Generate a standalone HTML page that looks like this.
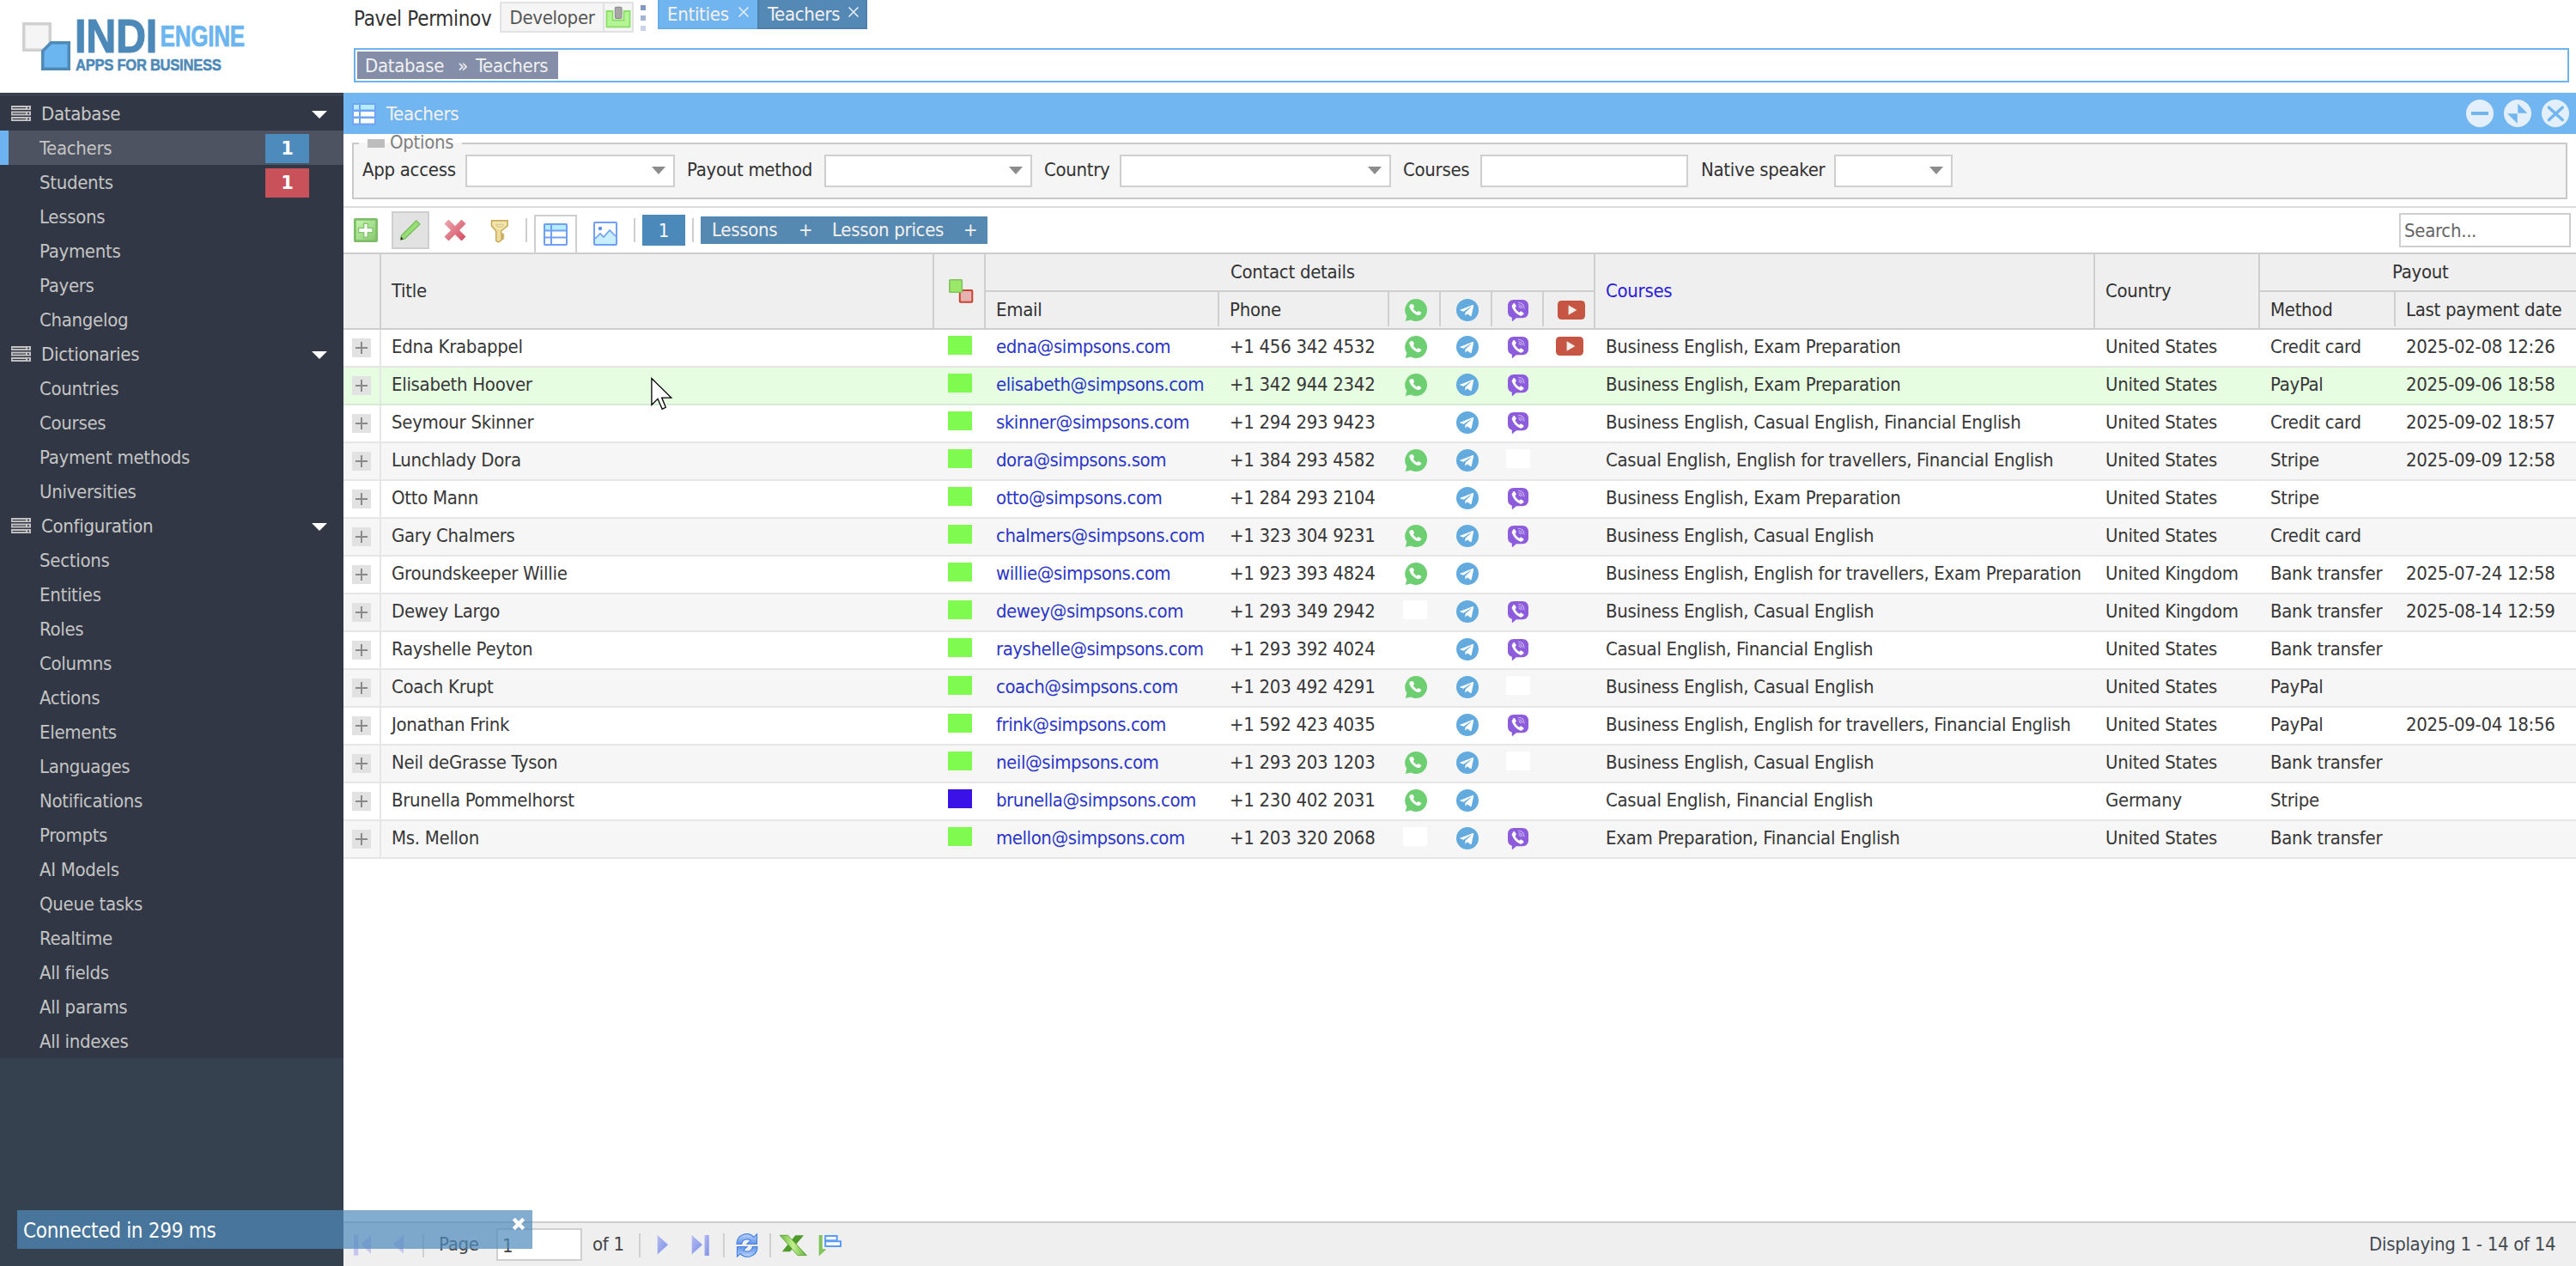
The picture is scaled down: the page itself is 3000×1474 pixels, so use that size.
<!DOCTYPE html>
<html lang="en"><head><meta charset="utf-8"><title>Teachers</title>
<style>
*{box-sizing:border-box}
html,body{margin:0;padding:0}
body{width:3000px;height:1474px;overflow:hidden;position:relative;background:#fff;color:#383838;
 font-family:"DejaVu Sans Condensed","Liberation Sans",sans-serif;font-size:22px;letter-spacing:-0.3px;line-height:26px}
.abs{position:absolute}
svg{display:block;position:absolute}
/* ---------- sidebar ---------- */
#side{position:absolute;left:0;top:108px;width:400px;height:1366px;background:#36414f}
#menu{position:absolute;left:0;top:0;width:400px;height:1124px;background:#313744;border-top:4px solid #38414e}
.mi{position:absolute;left:0;width:400px;height:40px;line-height:42px;color:#c4c4c4;padding-left:46px;white-space:nowrap}
.mi.g{padding-left:48px;color:#c8c8c8}
.mi.sel{background:#4d5360;border-left:10px solid #6db3f2;padding-left:36px}
.mi .ico{left:12.500px;top:10.500px}
.mi .arr{left:363px;top:17px}
.bdg{position:absolute;left:309px;top:4px;width:51px;height:34px;line-height:34px;text-align:center;color:#fff;font-weight:bold;font-family:"DejaVu Sans","Liberation Sans",sans-serif;font-size:21px;letter-spacing:0}
.sel .bdg{left:299px}
/* ---------- top ---------- */
#uname{position:absolute;left:412px;top:6.5px;font-size:24px;line-height:30px;color:#333;white-space:nowrap}
#dev{position:absolute;left:582px;top:2px;width:156px;height:36px;border:2px solid #e2e2e2;background:#f5f5f5}
#dev .t{position:absolute;left:9.5px;top:3.5px;color:#555;line-height:26px}
#dev .d{position:absolute;left:118px;top:0;width:2px;height:32px;background:#e2e2e2}
.tab{position:absolute;top:0;height:34px;line-height:34px;color:#f6f1ef;white-space:nowrap}
#bc{position:absolute;left:412px;top:56px;width:2580px;height:40px;border:2px solid #6db3f2;background:#fff}
#bc .p{position:absolute;left:2px;top:2px;width:234px;height:32px;background:#848ea8;color:#f1f1f1;line-height:33px;white-space:nowrap}
#bc .p span{position:absolute;top:0}
/* ---------- panel ---------- */
#ph{position:absolute;left:400px;top:108px;width:2600px;height:48px;background:#71b6f0;color:#f6f1ef}
#ph .t{position:absolute;left:50px;top:12px;line-height:26px}
#fs{position:absolute;left:410px;top:166px;width:2580px;height:66px;border:2px solid #c9c9c9;background:#f5f5f5}
#fs .lg{position:absolute;left:6px;top:-12px;height:23px;width:120px;background:linear-gradient(#fff 0,#fff 10px,#f5f5f5 10px)}
#fs .lg i{position:absolute;left:10px;top:6px;width:20px;height:10px;background:#bdbdbd}
#fs .lg span{position:absolute;left:36px;top:-3px;color:#808080;line-height:26px}
.fl{position:absolute;top:185px;line-height:26px;white-space:nowrap;color:#333}
.fi{position:absolute;top:180px;height:38px;border:2px solid #cfcfcf;background:#fff}
.fi i{position:absolute;right:9px;top:11.5px;width:0;height:0;border-left:8.5px solid transparent;border-right:8.5px solid transparent;border-top:9px solid #8c8c8c}
#tbline{position:absolute;left:400px;top:240px;width:2600px;height:2px;background:#dcdcdc}
.sep{position:absolute;top:254px;width:2px;height:28px;background:#cfcfcf}
/* ---------- grid ---------- */
#gh{position:absolute;left:400px;top:294px;width:2600px;height:90px;background:#efefef;border-top:2px solid #cdcdcd;border-bottom:2px solid #cdcdcd;overflow:hidden}
#gh .v{position:absolute;width:2px;background:#cfcfcf}
#gh .h{position:absolute;height:2px;background:#cfcfcf}
#gh .t{position:absolute;line-height:26px;white-space:nowrap;color:#333}
.row{position:absolute;left:400px;width:2600px;height:44px;border-bottom:2px solid #e6e6e6;background:#fff;overflow:hidden}
.row.alt{background:#f6f6f6}
.row.hov{background:#e6fde2;border-bottom-color:#d6ead6}
.row .c{position:absolute;top:7px;line-height:26px;white-space:nowrap}
.row .lnk{color:#2b36c9;letter-spacing:-0.45px}
.row .ex{position:absolute;left:10px;top:10px;width:22px;height:22px;background:#e2e2e2}
.row .ex:before{content:"";position:absolute;left:4px;top:10px;width:14px;height:2px;background:#8a8a8a}
.row .ex:after{content:"";position:absolute;left:10px;top:4px;width:2px;height:14px;background:#8a8a8a}
.row .v0{position:absolute;left:42px;top:0;width:2px;height:42px;background:#e6e6e6}
.row .sw{position:absolute;top:7px;width:28px;height:22px}
/* ---------- paging ---------- */
#pg{position:absolute;left:400px;top:1422px;width:2600px;height:52px;background:#efefef;border-top:2px solid #cdcdcd}
#pg .t{position:absolute;line-height:26px;top:12px;white-space:nowrap;color:#444}
#note{position:absolute;left:20px;top:1409px;width:600px;height:45px;background:rgba(78,139,188,.705);color:#fff;font-size:24px;line-height:30px}
#note .t{position:absolute;left:7px;top:9px;white-space:nowrap}
</style></head><body>
<svg style="left:0;top:0" width="400" height="108" viewBox="0 0 400 108">
<rect x="27.750" y="27.750" width="30.500" height="30.500" fill="#f5f5f5" stroke="#d0d0d0" stroke-width="3.500"/>
<path d="M59.400 49.750H80.250V80.250H49.750V59.400z" fill="#6bb6f0" stroke="#4e8ab8" stroke-width="3.500"/>
<text x="87" y="60.800" font-family="Liberation Sans, sans-serif" font-weight="bold" font-size="56" fill="#4d89b8" stroke="#4d89b8" stroke-width="1.200" textLength="96" lengthAdjust="spacingAndGlyphs">INDI</text>
<text x="186.500" y="54" font-family="Liberation Sans, sans-serif" font-weight="bold" font-size="34.500" fill="#6bb5f0" stroke="#6bb5f0" stroke-width=".7" textLength="98.500" lengthAdjust="spacingAndGlyphs">ENGINE</text>
<text x="88" y="81.500" font-family="Liberation Sans, sans-serif" font-weight="bold" font-size="18.500" fill="#4d89b8" stroke="#4d89b8" stroke-width=".5" textLength="169.500" lengthAdjust="spacingAndGlyphs">APPS FOR BUSINESS</text>
</svg>
<div id="uname">Pavel Perminov</div>
<div id="dev"><span class="t">Developer</span><span class="d"></span><svg style="left:121px;top:3px" width="30" height="26" viewBox="0 0 30 26"><path d="M1.500 6H8.500V16.500H21.500V6H28.500V24.300H1.500z" fill="#b4f595" stroke="#8ade63" stroke-width="1.800"/><rect x="11.400" y="1.300" width="7.600" height="13" rx="1" fill="#a6a6a6" stroke="#909090" stroke-width="1.200"/></svg></div>
<div class="abs" style="left:746px;top:6px;width:6px;height:6px;background:#8499c0"></div><div class="abs" style="left:746px;top:18px;width:6px;height:6px;background:#a4b4d4"></div><div class="abs" style="left:746px;top:30px;width:6px;height:6px;background:#c8d3e6"></div>
<div class="tab" style="left:766px;width:116px;background:#71b5f0;border-left:2px solid #69ade8;border-bottom:2px solid #69ade8;padding-left:9px">Entities<svg style="left:92px;top:8px" width="12" height="12" viewBox="0 0 12 12"><path d="M.5.500l11 11M11.500.500l-11 11" stroke="#e8f1fa" stroke-width="1.500" fill="none"/></svg></div>
<div class="tab" style="left:882px;width:128px;background:#5489b5;border-left:2px solid #4d81ac;border-bottom:2px solid #4d81ac;border-right:2px solid #4d81ac;padding-left:10px">Teachers<svg style="left:104px;top:8px" width="12" height="12" viewBox="0 0 12 12"><path d="M.5.500l11 11M11.500.500l-11 11" stroke="#e8f1fa" stroke-width="1.500" fill="none"/></svg></div>
<div id="bc"><div class="p"><span style="left:9px">Database</span><span style="left:117px">»</span><span style="left:138px">Teachers</span></div></div>
<div id="side"><div id="menu"></div>
<div class="mi g" style="top:4px">Database<svg class="ico" width="23" height="18" viewBox="0 0 23 18"><g fill="#c4c4c4"><rect x="0" y="0" width="23" height="5"/><rect x="0" y="6.500" width="23" height="5"/><rect x="0" y="13" width="23" height="5"/></g><g fill="#313744"><rect x="1.500" y="2" width="15.500" height="1.100"/><rect x="1.500" y="8.500" width="15.500" height="1.100"/><rect x="1.500" y="15" width="15.500" height="1.100"/><rect x="19" y="1.700" width="2" height="1.700"/><rect x="19" y="8.200" width="2" height="1.700"/><rect x="19" y="14.700" width="2" height="1.700"/></g></svg><svg class="arr" width="18" height="9" viewBox="0 0 18 9"><path d="M0 0h18l-9 9z" fill="#fff"/></svg></div>
<div class="mi sel" style="top:44px">Teachers<span class="bdg" style="background:#4c8bbb">1</span></div>
<div class="mi" style="top:84px">Students<span class="bdg" style="background:#c9515a">1</span></div>
<div class="mi" style="top:124px">Lessons</div>
<div class="mi" style="top:164px">Payments</div>
<div class="mi" style="top:204px">Payers</div>
<div class="mi" style="top:244px">Changelog</div>
<div class="mi g" style="top:284px">Dictionaries<svg class="ico" width="23" height="18" viewBox="0 0 23 18"><g fill="#c4c4c4"><rect x="0" y="0" width="23" height="5"/><rect x="0" y="6.500" width="23" height="5"/><rect x="0" y="13" width="23" height="5"/></g><g fill="#313744"><rect x="1.500" y="2" width="15.500" height="1.100"/><rect x="1.500" y="8.500" width="15.500" height="1.100"/><rect x="1.500" y="15" width="15.500" height="1.100"/><rect x="19" y="1.700" width="2" height="1.700"/><rect x="19" y="8.200" width="2" height="1.700"/><rect x="19" y="14.700" width="2" height="1.700"/></g></svg><svg class="arr" width="18" height="9" viewBox="0 0 18 9"><path d="M0 0h18l-9 9z" fill="#fff"/></svg></div>
<div class="mi" style="top:324px">Countries</div>
<div class="mi" style="top:364px">Courses</div>
<div class="mi" style="top:404px">Payment methods</div>
<div class="mi" style="top:444px">Universities</div>
<div class="mi g" style="top:484px">Configuration<svg class="ico" width="23" height="18" viewBox="0 0 23 18"><g fill="#c4c4c4"><rect x="0" y="0" width="23" height="5"/><rect x="0" y="6.500" width="23" height="5"/><rect x="0" y="13" width="23" height="5"/></g><g fill="#313744"><rect x="1.500" y="2" width="15.500" height="1.100"/><rect x="1.500" y="8.500" width="15.500" height="1.100"/><rect x="1.500" y="15" width="15.500" height="1.100"/><rect x="19" y="1.700" width="2" height="1.700"/><rect x="19" y="8.200" width="2" height="1.700"/><rect x="19" y="14.700" width="2" height="1.700"/></g></svg><svg class="arr" width="18" height="9" viewBox="0 0 18 9"><path d="M0 0h18l-9 9z" fill="#fff"/></svg></div>
<div class="mi" style="top:524px">Sections</div>
<div class="mi" style="top:564px">Entities</div>
<div class="mi" style="top:604px">Roles</div>
<div class="mi" style="top:644px">Columns</div>
<div class="mi" style="top:684px">Actions</div>
<div class="mi" style="top:724px">Elements</div>
<div class="mi" style="top:764px">Languages</div>
<div class="mi" style="top:804px">Notifications</div>
<div class="mi" style="top:844px">Prompts</div>
<div class="mi" style="top:884px">AI Models</div>
<div class="mi" style="top:924px">Queue tasks</div>
<div class="mi" style="top:964px">Realtime</div>
<div class="mi" style="top:1004px">All fields</div>
<div class="mi" style="top:1044px">All params</div>
<div class="mi" style="top:1084px">All indexes</div>
</div>
<div id="ph"><svg style="left:10px;top:12px" width="28" height="26" viewBox="0 0 28 26"><rect width="28" height="26" rx="2" fill="#6f9ff7" opacity=".75"/><rect x="2" y="2" width="6" height="5.500" fill="#b5ecff"/><rect x="10" y="2" width="16" height="5.500" fill="#b5ecff"/><rect x="2" y="10" width="6" height="5.500" fill="#fff"/><rect x="10" y="10" width="16" height="5.500" fill="#fff"/><rect x="2" y="18" width="6" height="5.500" fill="#fff"/><rect x="10" y="18" width="16" height="5.500" fill="#fff"/></svg><span class="t">Teachers</span><svg style="left:2472px;top:8px" width="32" height="32" viewBox="0 0 32 32"><circle cx="16" cy="16" r="16" fill="#e3f0fc"/><rect x="6" y="14" width="20" height="4" rx=".5" fill="#71b6f0"/></svg><svg style="left:2516px;top:8px" width="32" height="32" viewBox="0 0 32 32"><circle cx="16" cy="16" r="16" fill="#e3f0fc"/><path d="M16.300 4.700V15.700H27.400zM4.100 16.300H15.700V27.700z" fill="#71b6f0"/></svg><svg style="left:2560px;top:8px" width="32" height="32" viewBox="0 0 32 32"><circle cx="16" cy="16" r="16" fill="#e3f0fc"/><path d="M8.500 9.200L24.200 23.500M24.200 9.200L8.500 23.500" stroke="#71b6f0" stroke-width="3.500" stroke-linecap="round" fill="none"/></svg></div>
<div id="fs"><div class="lg"><i></i><span>Options</span></div></div>
<div class="fl" style="left:422px">App access</div><div class="fi" style="left:542px;width:244px"><i></i></div>
<div class="fl" style="left:800px">Payout method</div><div class="fi" style="left:960px;width:242px"><i></i></div>
<div class="fl" style="left:1216px">Country</div><div class="fi" style="left:1304px;width:316px"><i></i></div>
<div class="fl" style="left:1634px">Courses</div><div class="fi" style="left:1724px;width:242px"></div>
<div class="fl" style="left:1981px">Native speaker</div><div class="fi" style="left:2136px;width:138px"><i></i></div>
<div id="tbline"></div>
<svg style="left:412px;top:254px" width="28" height="28" viewBox="0 0 28 28"><defs><linearGradient id="ga" x1="0" y1="0" x2="1" y2="1"><stop offset="0" stop-color="#c6f8b2"/><stop offset="1" stop-color="#86c86e"/></linearGradient></defs><rect x="1.400" y="1.400" width="25.200" height="25.200" rx=".3" fill="url(#ga)" stroke="#7fbe68" stroke-width="2.800"/><path d="M11.700 6.200h4.600v5.300H22v5.200h-5.700v5.500h-4.600v-5.500H5.500v-5.200h6.200z" fill="#fff" stroke="#88c872" stroke-width="1.500" stroke-linejoin="round"/></svg>
<div class="abs" style="left:456px;top:246px;width:44px;height:44px;background:#e2e2e2;border:2px solid #cfcfcf"></div><svg style="left:465px;top:255px" width="26" height="26" viewBox="0 0 26 26"><path d="M19.800 1.900L24 6.100L6.500 23L1.500 24.200L2.500 19.300z" fill="#98de76" stroke="#74b956" stroke-width="1.200"/><path d="M1.500 24.200L2.100 20.500L5 23.500z" fill="#333"/></svg>
<svg style="left:517px;top:255px" width="26" height="26" viewBox="0 0 26 26"><defs><linearGradient id="gd" x1="0" y1="0" x2="1" y2="1"><stop offset="0" stop-color="#eeaab4"/><stop offset="1" stop-color="#d2495c"/></linearGradient></defs><path d="M5.500 .5L13 8L20.500 .5L25.500 5.500L18 13L25.500 20.500L20.500 25.500L13 18L5.500 25.500L.5 20.500L8 13L.5 5.500z" fill="url(#gd)"/></svg>
<svg style="left:570px;top:255px" width="24" height="28" viewBox="0 0 24 28"><path d="M2.400 1.800H21.200V8L13.600 14V16.800L16.700 17.600L13.600 19L16.700 20L13.600 21.500L16.700 22.600L13.600 24.200V25.300L10.300 27L7.700 25.300V14L2.400 8z" fill="#ecdc9c" stroke="#c6a758" stroke-width="1.400" stroke-linejoin="round"/><path d="M5 4.500H18.600V7.200L12.500 11.500H10.500L5 7.200z" fill="none" stroke="#f6ecbc" stroke-width="1.200"/><rect x="8.300" y="6.800" width="7.400" height="2" rx=".6" fill="#fffbe6" stroke="#c6a758" stroke-width=".7"/></svg>
<div class="sep" style="left:612px"></div><div class="abs" style="left:622px;top:250px;width:50px;height:46px;background:#fff;border:2px solid #cfcfcf;border-bottom:0"></div><svg style="left:633px;top:260px" width="28" height="26" viewBox="0 0 28 26"><rect x="1" y="1" width="26" height="24" rx="1" fill="#fff" stroke="#6f9ff7" stroke-width="2"/><rect x="2" y="2" width="24" height="6" fill="#b5ecff"/><path d="M1 8.500h26M1 16.500h26M9 1v24" stroke="#6f9ff7" stroke-width="2" fill="none"/></svg>
<svg style="left:691px;top:258px" width="28" height="28" viewBox="0 0 28 28"><rect x="1" y="1" width="26" height="26" rx="1" fill="#fff" stroke="#6f9ff7" stroke-width="2"/><path d="M2 20l6-6 4 4 7-8 7 7v9H2z" fill="#c8efff"/><path d="M2 20l6-6 4 4 7-8 7 7" fill="none" stroke="#6f9ff7" stroke-width="1.600"/><circle cx="8" cy="8" r="2.200" fill="#5b8ff5"/></svg>
<div class="sep" style="left:738px"></div><div class="abs" style="left:748px;top:250px;width:50px;height:36px;background:#4a89b9;color:#fff;text-align:center;line-height:38px">1</div><div class="sep" style="left:806px"></div><div class="abs" style="left:816px;top:252px;width:334px;height:32px;background:#5689b2;color:#f6f1ef;line-height:32px;white-space:nowrap"><span class="abs" style="left:13px">Lessons</span><span class="abs" style="left:114px">+</span><span class="abs" style="left:153px">Lesson prices</span><span class="abs" style="left:306px">+</span></div>
<div class="abs" style="left:2794px;top:248px;width:200px;height:40px;border:2px solid #cfcfcf;background:#fff"><span class="abs" style="left:4px;top:6px;color:#666;line-height:26px">Search...</span></div>
<div id="gh"><i class="v" style="left:42px;top:0px;height:86px"></i><i class="v" style="left:686px;top:0px;height:86px"></i><i class="v" style="left:746px;top:0px;height:86px"></i><i class="v" style="left:1018px;top:44px;height:40px"></i><i class="v" style="left:1216px;top:44px;height:40px"></i><i class="v" style="left:1276px;top:44px;height:40px"></i><i class="v" style="left:1336px;top:44px;height:40px"></i><i class="v" style="left:1396px;top:44px;height:40px"></i><i class="v" style="left:1456px;top:0px;height:86px"></i><i class="v" style="left:2038px;top:0px;height:86px"></i><i class="v" style="left:2230px;top:0px;height:86px"></i><i class="v" style="left:2388px;top:44px;height:40px"></i><i class="h" style="left:748px;top:42px;width:708px"></i><i class="h" style="left:2232px;top:42px;width:368px"></i><span class="t" style="left:56px;top:30px;">Title</span><span class="t" style="left:760px;top:52px;">Email</span><span class="t" style="left:1032px;top:52px;">Phone</span><span class="t" style="left:1033px;top:8px;">Contact details</span><span class="t" style="left:1470px;top:30px;color:#2a1be0">Courses</span><span class="t" style="left:2052px;top:30px;">Country</span><span class="t" style="left:2386px;top:8px;">Payout</span><span class="t" style="left:2244px;top:52px;">Method</span><span class="t" style="left:2402px;top:52px;">Last payment date</span><svg style="left:705px;top:29px" width="30" height="30" viewBox="0 0 30 30"><rect x="12.800" y="13" width="14.500" height="13.700" rx=".8" fill="#e6b2b2" stroke="#c9432f" stroke-width="2"/><rect x=".8" y=".8" width="14.500" height="14.400" rx=".8" fill="#9be868" stroke="#7fc25e" stroke-width="1.600"/></svg><svg style="left:1236px;top:52px" width="26" height="26" viewBox="0 0 26 26"><path d="M13 0a13 13 0 1 1-6.200 24.430L.7 26l1.650-5.900A13 13 0 0 1 13 0z" fill="#6ecf72"/><path d="M8.300 6.200c.6-.55 1.400-.4 1.750.3l.95 1.900c.25.500.15 1.050-.25 1.450l-.75.750c.9 1.800 2.200 3.100 4 4l.75-.75c.4-.4.950-.5 1.450-.25l1.900.95c.7.350.85 1.150.3 1.750l-.8.800c-.85.850-2.050 1.050-3.150.65-4.100-1.500-6.800-4.200-8.300-8.300-.4-1.100-.2-2.300.65-3.150z" fill="#fff" transform="translate(13 13.700) scale(1.090) translate(-13 -13)"/></svg><svg style="left:1296px;top:52px" width="26" height="26" viewBox="0 0 26 26"><circle cx="13" cy="13" r="13" fill="#63abdf"/><path d="M5.200 12.600l13.900-5.500c.65-.25 1.200.15 1 1.100l-2.400 11.200c-.15.800-.65 1-1.300.6l-3.650-2.700-1.750 1.700c-.2.200-.35.350-.75.350l.25-3.700 6.800-6.150c.3-.25-.05-.4-.45-.15l-8.400 5.300-3.600-1.150c-.8-.25-.8-.8.350-1.250z" fill="#fff"/></svg><svg style="left:1356px;top:53px" width="24" height="25" viewBox="0 0 24 25"><path d="M7 0h10c4.200 0 7 2.800 7 7v7.200c0 4.200-2.800 7-7 7H9.800L5.800 24.700c-.4.500-1 .3-1-.4v-3.600C1.800 19.800 0 17.600 0 14.200V7C0 2.800 2.800 0 7 0z" fill="#8d5cdc"/><g transform="translate(11.300 11.400) scale(1.170) translate(-11.500 -10.500)"><path d="M7.200 4.600c.5-.5 1.200-.4 1.600.1l1.200 1.700c.3.500.3 1-.1 1.400l-.8.800c.9 2.100 2.300 3.700 4.300 4.800l.8-.8c.4-.4 1-.5 1.400-.1l1.700 1.200c.6.400.6 1.100.1 1.600l-.7.700c-.7.700-1.700.9-2.700.5-3.800-1.600-6.400-4.400-7.900-8.200-.4-1-.2-2 .5-2.700z" fill="#fff"/><path d="M12.500 3.600c3.300.3 5.400 2.400 5.600 5.700M12.700 5.600c2 .2 3.200 1.400 3.400 3.400M12.900 7.500c.9.100 1.400.6 1.500 1.500" fill="none" stroke="#cdb8f2" stroke-width=".9" stroke-linecap="round"/></g></svg><svg style="left:1414px;top:54px" width="32" height="22" viewBox="0 0 32 22"><rect width="32" height="22" rx="4.500" fill="#c75544"/><path d="M12.600 5.200v11.600l9.800-5.800z" fill="#f3efe8"/></svg></div>
<div class="row" style="top:384px"><i class="ex"></i><i class="v0"></i><span class="c" style="left:56px">Edna Krabappel</span><i class="sw" style="left:704px;background:#7ffb4f"></i><span class="c lnk" style="left:760px">edna@simpsons.com</span><span class="c" style="left:1032px">+1 456 342 4532</span><svg style="left:1236px;top:7px" width="26" height="26" viewBox="0 0 26 26"><path d="M13 0a13 13 0 1 1-6.200 24.430L.7 26l1.650-5.900A13 13 0 0 1 13 0z" fill="#6ecf72"/><path d="M8.300 6.200c.6-.55 1.400-.4 1.750.3l.95 1.900c.25.500.15 1.050-.25 1.450l-.75.750c.9 1.800 2.200 3.100 4 4l.75-.75c.4-.4.950-.5 1.450-.25l1.900.95c.7.350.85 1.150.3 1.750l-.8.800c-.85.850-2.050 1.050-3.150.65-4.100-1.500-6.800-4.200-8.300-8.300-.4-1.100-.2-2.300.65-3.150z" fill="#fff" transform="translate(13 13.700) scale(1.090) translate(-13 -13)"/></svg><svg style="left:1296px;top:7px" width="26" height="26" viewBox="0 0 26 26"><circle cx="13" cy="13" r="13" fill="#63abdf"/><path d="M5.200 12.600l13.900-5.500c.65-.25 1.200.15 1 1.100l-2.400 11.200c-.15.800-.65 1-1.300.6l-3.650-2.700-1.750 1.700c-.2.200-.35.350-.75.350l.25-3.700 6.800-6.150c.3-.25-.05-.4-.45-.15l-8.400 5.300-3.600-1.150c-.8-.25-.8-.8.350-1.250z" fill="#fff"/></svg><svg style="left:1356px;top:8px" width="24" height="25" viewBox="0 0 24 25"><path d="M7 0h10c4.200 0 7 2.800 7 7v7.200c0 4.200-2.800 7-7 7H9.800L5.800 24.700c-.4.500-1 .3-1-.4v-3.600C1.800 19.800 0 17.600 0 14.200V7C0 2.800 2.800 0 7 0z" fill="#8d5cdc"/><g transform="translate(11.300 11.400) scale(1.170) translate(-11.500 -10.500)"><path d="M7.200 4.600c.5-.5 1.200-.4 1.600.1l1.200 1.700c.3.500.3 1-.1 1.400l-.8.800c.9 2.100 2.300 3.700 4.300 4.800l.8-.8c.4-.4 1-.5 1.400-.1l1.700 1.200c.6.400.6 1.100.1 1.600l-.7.700c-.7.700-1.700.9-2.700.5-3.800-1.600-6.400-4.400-7.900-8.200-.4-1-.2-2 .5-2.700z" fill="#fff"/><path d="M12.500 3.600c3.300.3 5.400 2.400 5.600 5.700M12.700 5.600c2 .2 3.200 1.400 3.400 3.400M12.900 7.500c.9.100 1.400.6 1.500 1.500" fill="none" stroke="#cdb8f2" stroke-width=".9" stroke-linecap="round"/></g></svg><svg style="left:1412px;top:8px" width="32" height="22" viewBox="0 0 32 22"><rect width="32" height="22" rx="4.500" fill="#c75544"/><path d="M12.600 5.200v11.600l9.800-5.800z" fill="#f3efe8"/></svg><span class="c" style="left:1470px">Business English, Exam Preparation</span><span class="c" style="left:2052px">United States</span><span class="c" style="left:2244px">Credit card</span><span class="c" style="left:2402px">2025-02-08 12:26</span></div>
<div class="row alt hov" style="top:428px"><i class="ex"></i><i class="v0"></i><span class="c" style="left:56px">Elisabeth Hoover</span><i class="sw" style="left:704px;background:#7ffb4f"></i><span class="c lnk" style="left:760px">elisabeth@simpsons.com</span><span class="c" style="left:1032px">+1 342 944 2342</span><svg style="left:1236px;top:7px" width="26" height="26" viewBox="0 0 26 26"><path d="M13 0a13 13 0 1 1-6.200 24.430L.7 26l1.650-5.900A13 13 0 0 1 13 0z" fill="#6ecf72"/><path d="M8.300 6.200c.6-.55 1.400-.4 1.750.3l.95 1.900c.25.500.15 1.050-.25 1.450l-.75.750c.9 1.800 2.200 3.100 4 4l.75-.75c.4-.4.950-.5 1.450-.25l1.900.95c.7.350.85 1.150.3 1.750l-.8.800c-.85.850-2.050 1.050-3.150.65-4.100-1.500-6.800-4.200-8.300-8.300-.4-1.100-.2-2.300.65-3.150z" fill="#fff" transform="translate(13 13.700) scale(1.090) translate(-13 -13)"/></svg><svg style="left:1296px;top:7px" width="26" height="26" viewBox="0 0 26 26"><circle cx="13" cy="13" r="13" fill="#63abdf"/><path d="M5.200 12.600l13.900-5.500c.65-.25 1.200.15 1 1.100l-2.400 11.200c-.15.800-.65 1-1.300.6l-3.650-2.700-1.750 1.700c-.2.200-.35.350-.75.350l.25-3.700 6.800-6.150c.3-.25-.05-.4-.45-.15l-8.400 5.300-3.600-1.150c-.8-.25-.8-.8.350-1.250z" fill="#fff"/></svg><svg style="left:1356px;top:8px" width="24" height="25" viewBox="0 0 24 25"><path d="M7 0h10c4.200 0 7 2.800 7 7v7.200c0 4.200-2.800 7-7 7H9.800L5.800 24.700c-.4.500-1 .3-1-.4v-3.600C1.800 19.800 0 17.600 0 14.200V7C0 2.800 2.800 0 7 0z" fill="#8d5cdc"/><g transform="translate(11.300 11.400) scale(1.170) translate(-11.500 -10.500)"><path d="M7.200 4.600c.5-.5 1.200-.4 1.600.1l1.200 1.700c.3.500.3 1-.1 1.400l-.8.800c.9 2.100 2.300 3.700 4.300 4.800l.8-.8c.4-.4 1-.5 1.400-.1l1.700 1.200c.6.400.6 1.100.1 1.600l-.7.700c-.7.700-1.700.9-2.700.5-3.800-1.600-6.400-4.400-7.900-8.200-.4-1-.2-2 .5-2.700z" fill="#fff"/><path d="M12.500 3.600c3.300.3 5.400 2.400 5.600 5.700M12.700 5.600c2 .2 3.200 1.400 3.400 3.400M12.900 7.500c.9.100 1.400.6 1.500 1.500" fill="none" stroke="#cdb8f2" stroke-width=".9" stroke-linecap="round"/></g></svg><span class="c" style="left:1470px">Business English, Exam Preparation</span><span class="c" style="left:2052px">United States</span><span class="c" style="left:2244px">PayPal</span><span class="c" style="left:2402px">2025-09-06 18:58</span></div>
<div class="row" style="top:472px"><i class="ex"></i><i class="v0"></i><span class="c" style="left:56px">Seymour Skinner</span><i class="sw" style="left:704px;background:#7ffb4f"></i><span class="c lnk" style="left:760px">skinner@simpsons.com</span><span class="c" style="left:1032px">+1 294 293 9423</span><i class="sw" style="left:1234px;background:#fff"></i><svg style="left:1296px;top:7px" width="26" height="26" viewBox="0 0 26 26"><circle cx="13" cy="13" r="13" fill="#63abdf"/><path d="M5.200 12.600l13.900-5.500c.65-.25 1.200.15 1 1.100l-2.400 11.200c-.15.800-.65 1-1.300.6l-3.650-2.700-1.750 1.700c-.2.200-.35.350-.75.350l.25-3.700 6.800-6.150c.3-.25-.05-.4-.45-.15l-8.400 5.300-3.600-1.150c-.8-.25-.8-.8.350-1.250z" fill="#fff"/></svg><svg style="left:1356px;top:8px" width="24" height="25" viewBox="0 0 24 25"><path d="M7 0h10c4.200 0 7 2.800 7 7v7.200c0 4.200-2.800 7-7 7H9.800L5.800 24.700c-.4.500-1 .3-1-.4v-3.600C1.800 19.800 0 17.600 0 14.200V7C0 2.800 2.800 0 7 0z" fill="#8d5cdc"/><g transform="translate(11.300 11.400) scale(1.170) translate(-11.500 -10.500)"><path d="M7.200 4.600c.5-.5 1.200-.4 1.600.1l1.200 1.700c.3.500.3 1-.1 1.400l-.8.800c.9 2.100 2.300 3.700 4.300 4.800l.8-.8c.4-.4 1-.5 1.400-.1l1.700 1.200c.6.400.6 1.100.1 1.600l-.7.700c-.7.700-1.700.9-2.700.5-3.800-1.600-6.400-4.400-7.900-8.200-.4-1-.2-2 .5-2.700z" fill="#fff"/><path d="M12.500 3.600c3.300.3 5.400 2.400 5.600 5.700M12.700 5.600c2 .2 3.200 1.400 3.400 3.400M12.900 7.500c.9.100 1.400.6 1.500 1.500" fill="none" stroke="#cdb8f2" stroke-width=".9" stroke-linecap="round"/></g></svg><span class="c" style="left:1470px">Business English, Casual English, Financial English</span><span class="c" style="left:2052px">United States</span><span class="c" style="left:2244px">Credit card</span><span class="c" style="left:2402px">2025-09-02 18:57</span></div>
<div class="row alt" style="top:516px"><i class="ex"></i><i class="v0"></i><span class="c" style="left:56px">Lunchlady Dora</span><i class="sw" style="left:704px;background:#7ffb4f"></i><span class="c lnk" style="left:760px">dora@simpsons.som</span><span class="c" style="left:1032px">+1 384 293 4582</span><svg style="left:1236px;top:7px" width="26" height="26" viewBox="0 0 26 26"><path d="M13 0a13 13 0 1 1-6.200 24.430L.7 26l1.650-5.900A13 13 0 0 1 13 0z" fill="#6ecf72"/><path d="M8.300 6.200c.6-.55 1.400-.4 1.750.3l.95 1.900c.25.500.15 1.050-.25 1.450l-.75.750c.9 1.800 2.200 3.100 4 4l.75-.75c.4-.4.950-.5 1.450-.25l1.900.95c.7.350.85 1.150.3 1.750l-.8.800c-.85.850-2.050 1.050-3.150.65-4.100-1.500-6.800-4.200-8.300-8.300-.4-1.100-.2-2.300.65-3.150z" fill="#fff" transform="translate(13 13.700) scale(1.090) translate(-13 -13)"/></svg><svg style="left:1296px;top:7px" width="26" height="26" viewBox="0 0 26 26"><circle cx="13" cy="13" r="13" fill="#63abdf"/><path d="M5.200 12.600l13.900-5.500c.65-.25 1.200.15 1 1.100l-2.400 11.200c-.15.800-.65 1-1.300.6l-3.650-2.700-1.750 1.700c-.2.200-.35.350-.75.350l.25-3.700 6.800-6.150c.3-.25-.05-.4-.45-.15l-8.400 5.300-3.600-1.150c-.8-.25-.8-.8.350-1.250z" fill="#fff"/></svg><i class="sw" style="left:1354px;background:#fff"></i><span class="c" style="left:1470px">Casual English, English for travellers, Financial English</span><span class="c" style="left:2052px">United States</span><span class="c" style="left:2244px">Stripe</span><span class="c" style="left:2402px">2025-09-09 12:58</span></div>
<div class="row" style="top:560px"><i class="ex"></i><i class="v0"></i><span class="c" style="left:56px">Otto Mann</span><i class="sw" style="left:704px;background:#7ffb4f"></i><span class="c lnk" style="left:760px">otto@simpsons.com</span><span class="c" style="left:1032px">+1 284 293 2104</span><i class="sw" style="left:1234px;background:#fff"></i><svg style="left:1296px;top:7px" width="26" height="26" viewBox="0 0 26 26"><circle cx="13" cy="13" r="13" fill="#63abdf"/><path d="M5.200 12.600l13.900-5.500c.65-.25 1.200.15 1 1.100l-2.400 11.200c-.15.800-.65 1-1.300.6l-3.650-2.700-1.750 1.700c-.2.200-.35.350-.75.350l.25-3.700 6.800-6.150c.3-.25-.05-.4-.45-.15l-8.400 5.300-3.600-1.150c-.8-.25-.8-.8.350-1.250z" fill="#fff"/></svg><svg style="left:1356px;top:8px" width="24" height="25" viewBox="0 0 24 25"><path d="M7 0h10c4.200 0 7 2.800 7 7v7.200c0 4.200-2.800 7-7 7H9.800L5.800 24.700c-.4.500-1 .3-1-.4v-3.600C1.800 19.800 0 17.600 0 14.200V7C0 2.800 2.800 0 7 0z" fill="#8d5cdc"/><g transform="translate(11.300 11.400) scale(1.170) translate(-11.500 -10.500)"><path d="M7.200 4.600c.5-.5 1.200-.4 1.600.1l1.200 1.700c.3.500.3 1-.1 1.400l-.8.800c.9 2.100 2.300 3.700 4.300 4.800l.8-.8c.4-.4 1-.5 1.400-.1l1.700 1.200c.6.400.6 1.100.1 1.600l-.7.700c-.7.700-1.700.9-2.700.5-3.800-1.600-6.400-4.400-7.900-8.200-.4-1-.2-2 .5-2.700z" fill="#fff"/><path d="M12.500 3.600c3.300.3 5.400 2.400 5.600 5.700M12.700 5.600c2 .2 3.200 1.400 3.400 3.400M12.900 7.500c.9.100 1.400.6 1.500 1.500" fill="none" stroke="#cdb8f2" stroke-width=".9" stroke-linecap="round"/></g></svg><span class="c" style="left:1470px">Business English, Exam Preparation</span><span class="c" style="left:2052px">United States</span><span class="c" style="left:2244px">Stripe</span></div>
<div class="row alt" style="top:604px"><i class="ex"></i><i class="v0"></i><span class="c" style="left:56px">Gary Chalmers</span><i class="sw" style="left:704px;background:#7ffb4f"></i><span class="c lnk" style="left:760px">chalmers@simpsons.com</span><span class="c" style="left:1032px">+1 323 304 9231</span><svg style="left:1236px;top:7px" width="26" height="26" viewBox="0 0 26 26"><path d="M13 0a13 13 0 1 1-6.200 24.430L.7 26l1.650-5.900A13 13 0 0 1 13 0z" fill="#6ecf72"/><path d="M8.300 6.200c.6-.55 1.400-.4 1.750.3l.95 1.900c.25.500.15 1.050-.25 1.450l-.75.750c.9 1.800 2.200 3.100 4 4l.75-.75c.4-.4.950-.5 1.450-.25l1.900.95c.7.350.85 1.150.3 1.750l-.8.800c-.85.850-2.050 1.050-3.150.65-4.100-1.500-6.800-4.200-8.300-8.300-.4-1.100-.2-2.300.65-3.150z" fill="#fff" transform="translate(13 13.700) scale(1.090) translate(-13 -13)"/></svg><svg style="left:1296px;top:7px" width="26" height="26" viewBox="0 0 26 26"><circle cx="13" cy="13" r="13" fill="#63abdf"/><path d="M5.200 12.600l13.900-5.500c.65-.25 1.200.15 1 1.100l-2.400 11.200c-.15.800-.65 1-1.300.6l-3.650-2.700-1.750 1.700c-.2.200-.35.350-.75.350l.25-3.700 6.800-6.150c.3-.25-.05-.4-.45-.15l-8.400 5.300-3.600-1.150c-.8-.25-.8-.8.350-1.250z" fill="#fff"/></svg><svg style="left:1356px;top:8px" width="24" height="25" viewBox="0 0 24 25"><path d="M7 0h10c4.200 0 7 2.800 7 7v7.200c0 4.200-2.800 7-7 7H9.800L5.800 24.700c-.4.500-1 .3-1-.4v-3.600C1.800 19.800 0 17.600 0 14.200V7C0 2.800 2.800 0 7 0z" fill="#8d5cdc"/><g transform="translate(11.300 11.400) scale(1.170) translate(-11.500 -10.500)"><path d="M7.200 4.600c.5-.5 1.200-.4 1.600.1l1.200 1.700c.3.500.3 1-.1 1.400l-.8.800c.9 2.100 2.300 3.700 4.300 4.800l.8-.8c.4-.4 1-.5 1.400-.1l1.700 1.200c.6.400.6 1.100.1 1.600l-.7.700c-.7.700-1.700.9-2.700.5-3.800-1.600-6.400-4.400-7.900-8.200-.4-1-.2-2 .5-2.700z" fill="#fff"/><path d="M12.500 3.600c3.300.3 5.400 2.400 5.600 5.700M12.700 5.600c2 .2 3.200 1.400 3.400 3.400M12.900 7.500c.9.100 1.400.6 1.500 1.500" fill="none" stroke="#cdb8f2" stroke-width=".9" stroke-linecap="round"/></g></svg><span class="c" style="left:1470px">Business English, Casual English</span><span class="c" style="left:2052px">United States</span><span class="c" style="left:2244px">Credit card</span></div>
<div class="row" style="top:648px"><i class="ex"></i><i class="v0"></i><span class="c" style="left:56px">Groundskeeper Willie</span><i class="sw" style="left:704px;background:#7ffb4f"></i><span class="c lnk" style="left:760px">willie@simpsons.com</span><span class="c" style="left:1032px">+1 923 393 4824</span><svg style="left:1236px;top:7px" width="26" height="26" viewBox="0 0 26 26"><path d="M13 0a13 13 0 1 1-6.200 24.430L.7 26l1.650-5.900A13 13 0 0 1 13 0z" fill="#6ecf72"/><path d="M8.300 6.200c.6-.55 1.400-.4 1.750.3l.95 1.900c.25.500.15 1.050-.25 1.450l-.75.750c.9 1.800 2.200 3.100 4 4l.75-.75c.4-.4.950-.5 1.450-.25l1.900.95c.7.350.85 1.150.3 1.750l-.8.800c-.85.850-2.050 1.050-3.150.65-4.100-1.500-6.800-4.200-8.300-8.300-.4-1.100-.2-2.300.65-3.150z" fill="#fff" transform="translate(13 13.700) scale(1.090) translate(-13 -13)"/></svg><svg style="left:1296px;top:7px" width="26" height="26" viewBox="0 0 26 26"><circle cx="13" cy="13" r="13" fill="#63abdf"/><path d="M5.200 12.600l13.900-5.500c.65-.25 1.200.15 1 1.100l-2.400 11.200c-.15.800-.65 1-1.300.6l-3.650-2.700-1.750 1.700c-.2.200-.35.350-.75.350l.25-3.700 6.800-6.150c.3-.25-.05-.4-.45-.15l-8.400 5.300-3.600-1.150c-.8-.25-.8-.8.350-1.250z" fill="#fff"/></svg><i class="sw" style="left:1354px;background:#fff"></i><span class="c" style="left:1470px">Business English, English for travellers, Exam Preparation</span><span class="c" style="left:2052px">United Kingdom</span><span class="c" style="left:2244px">Bank transfer</span><span class="c" style="left:2402px">2025-07-24 12:58</span></div>
<div class="row alt" style="top:692px"><i class="ex"></i><i class="v0"></i><span class="c" style="left:56px">Dewey Largo</span><i class="sw" style="left:704px;background:#7ffb4f"></i><span class="c lnk" style="left:760px">dewey@simpsons.com</span><span class="c" style="left:1032px">+1 293 349 2942</span><i class="sw" style="left:1234px;background:#fff"></i><svg style="left:1296px;top:7px" width="26" height="26" viewBox="0 0 26 26"><circle cx="13" cy="13" r="13" fill="#63abdf"/><path d="M5.200 12.600l13.900-5.500c.65-.25 1.200.15 1 1.100l-2.400 11.200c-.15.800-.65 1-1.300.6l-3.650-2.700-1.750 1.700c-.2.200-.35.350-.75.350l.25-3.700 6.800-6.150c.3-.25-.05-.4-.45-.15l-8.400 5.300-3.600-1.150c-.8-.25-.8-.8.350-1.250z" fill="#fff"/></svg><svg style="left:1356px;top:8px" width="24" height="25" viewBox="0 0 24 25"><path d="M7 0h10c4.200 0 7 2.800 7 7v7.200c0 4.200-2.800 7-7 7H9.800L5.800 24.700c-.4.500-1 .3-1-.4v-3.600C1.800 19.800 0 17.600 0 14.200V7C0 2.800 2.800 0 7 0z" fill="#8d5cdc"/><g transform="translate(11.300 11.400) scale(1.170) translate(-11.500 -10.500)"><path d="M7.200 4.600c.5-.5 1.200-.4 1.600.1l1.200 1.700c.3.500.3 1-.1 1.400l-.8.800c.9 2.100 2.300 3.700 4.300 4.800l.8-.8c.4-.4 1-.5 1.400-.1l1.700 1.200c.6.400.6 1.100.1 1.600l-.7.700c-.7.700-1.700.9-2.700.5-3.800-1.600-6.400-4.400-7.900-8.200-.4-1-.2-2 .5-2.700z" fill="#fff"/><path d="M12.500 3.600c3.300.3 5.400 2.400 5.600 5.700M12.700 5.600c2 .2 3.200 1.400 3.400 3.400M12.900 7.500c.9.100 1.400.6 1.500 1.500" fill="none" stroke="#cdb8f2" stroke-width=".9" stroke-linecap="round"/></g></svg><span class="c" style="left:1470px">Business English, Casual English</span><span class="c" style="left:2052px">United Kingdom</span><span class="c" style="left:2244px">Bank transfer</span><span class="c" style="left:2402px">2025-08-14 12:59</span></div>
<div class="row" style="top:736px"><i class="ex"></i><i class="v0"></i><span class="c" style="left:56px">Rayshelle Peyton</span><i class="sw" style="left:704px;background:#7ffb4f"></i><span class="c lnk" style="left:760px">rayshelle@simpsons.com</span><span class="c" style="left:1032px">+1 293 392 4024</span><i class="sw" style="left:1234px;background:#fff"></i><svg style="left:1296px;top:7px" width="26" height="26" viewBox="0 0 26 26"><circle cx="13" cy="13" r="13" fill="#63abdf"/><path d="M5.200 12.600l13.900-5.500c.65-.25 1.200.15 1 1.100l-2.400 11.200c-.15.800-.65 1-1.300.6l-3.650-2.700-1.750 1.700c-.2.200-.35.350-.75.350l.25-3.700 6.800-6.150c.3-.25-.05-.4-.45-.15l-8.400 5.300-3.600-1.150c-.8-.25-.8-.8.350-1.250z" fill="#fff"/></svg><svg style="left:1356px;top:8px" width="24" height="25" viewBox="0 0 24 25"><path d="M7 0h10c4.200 0 7 2.800 7 7v7.200c0 4.200-2.800 7-7 7H9.800L5.800 24.700c-.4.500-1 .3-1-.4v-3.600C1.800 19.800 0 17.600 0 14.200V7C0 2.800 2.800 0 7 0z" fill="#8d5cdc"/><g transform="translate(11.300 11.400) scale(1.170) translate(-11.500 -10.500)"><path d="M7.200 4.600c.5-.5 1.200-.4 1.600.1l1.200 1.700c.3.500.3 1-.1 1.400l-.8.800c.9 2.100 2.300 3.700 4.300 4.800l.8-.8c.4-.4 1-.5 1.400-.1l1.700 1.200c.6.400.6 1.100.1 1.600l-.7.700c-.7.700-1.700.9-2.700.5-3.800-1.600-6.400-4.400-7.900-8.200-.4-1-.2-2 .5-2.700z" fill="#fff"/><path d="M12.500 3.600c3.300.3 5.400 2.400 5.600 5.700M12.700 5.600c2 .2 3.200 1.400 3.400 3.400M12.900 7.500c.9.100 1.400.6 1.500 1.500" fill="none" stroke="#cdb8f2" stroke-width=".9" stroke-linecap="round"/></g></svg><span class="c" style="left:1470px">Casual English, Financial English</span><span class="c" style="left:2052px">United States</span><span class="c" style="left:2244px">Bank transfer</span></div>
<div class="row alt" style="top:780px"><i class="ex"></i><i class="v0"></i><span class="c" style="left:56px">Coach Krupt</span><i class="sw" style="left:704px;background:#7ffb4f"></i><span class="c lnk" style="left:760px">coach@simpsons.com</span><span class="c" style="left:1032px">+1 203 492 4291</span><svg style="left:1236px;top:7px" width="26" height="26" viewBox="0 0 26 26"><path d="M13 0a13 13 0 1 1-6.200 24.430L.7 26l1.650-5.900A13 13 0 0 1 13 0z" fill="#6ecf72"/><path d="M8.300 6.200c.6-.55 1.400-.4 1.750.3l.95 1.900c.25.500.15 1.050-.25 1.450l-.75.750c.9 1.800 2.200 3.100 4 4l.75-.75c.4-.4.950-.5 1.450-.25l1.900.95c.7.350.85 1.150.3 1.750l-.8.800c-.85.850-2.050 1.050-3.150.65-4.100-1.500-6.800-4.200-8.300-8.300-.4-1.100-.2-2.300.65-3.150z" fill="#fff" transform="translate(13 13.700) scale(1.090) translate(-13 -13)"/></svg><svg style="left:1296px;top:7px" width="26" height="26" viewBox="0 0 26 26"><circle cx="13" cy="13" r="13" fill="#63abdf"/><path d="M5.200 12.600l13.900-5.500c.65-.25 1.200.15 1 1.100l-2.400 11.200c-.15.800-.65 1-1.300.6l-3.650-2.700-1.750 1.700c-.2.200-.35.350-.75.350l.25-3.700 6.800-6.150c.3-.25-.05-.4-.45-.15l-8.400 5.300-3.600-1.150c-.8-.25-.8-.8.350-1.250z" fill="#fff"/></svg><i class="sw" style="left:1354px;background:#fff"></i><span class="c" style="left:1470px">Business English, Casual English</span><span class="c" style="left:2052px">United States</span><span class="c" style="left:2244px">PayPal</span></div>
<div class="row" style="top:824px"><i class="ex"></i><i class="v0"></i><span class="c" style="left:56px">Jonathan Frink</span><i class="sw" style="left:704px;background:#7ffb4f"></i><span class="c lnk" style="left:760px">frink@simpsons.com</span><span class="c" style="left:1032px">+1 592 423 4035</span><i class="sw" style="left:1234px;background:#fff"></i><svg style="left:1296px;top:7px" width="26" height="26" viewBox="0 0 26 26"><circle cx="13" cy="13" r="13" fill="#63abdf"/><path d="M5.200 12.600l13.900-5.500c.65-.25 1.200.15 1 1.100l-2.400 11.200c-.15.800-.65 1-1.300.6l-3.650-2.700-1.750 1.700c-.2.200-.35.350-.75.350l.25-3.700 6.800-6.150c.3-.25-.05-.4-.45-.15l-8.400 5.300-3.600-1.150c-.8-.25-.8-.8.350-1.250z" fill="#fff"/></svg><svg style="left:1356px;top:8px" width="24" height="25" viewBox="0 0 24 25"><path d="M7 0h10c4.200 0 7 2.800 7 7v7.200c0 4.200-2.800 7-7 7H9.800L5.800 24.700c-.4.500-1 .3-1-.4v-3.600C1.800 19.800 0 17.600 0 14.200V7C0 2.800 2.800 0 7 0z" fill="#8d5cdc"/><g transform="translate(11.300 11.400) scale(1.170) translate(-11.500 -10.500)"><path d="M7.200 4.600c.5-.5 1.200-.4 1.600.1l1.200 1.700c.3.500.3 1-.1 1.400l-.8.800c.9 2.100 2.300 3.700 4.300 4.800l.8-.8c.4-.4 1-.5 1.400-.1l1.700 1.200c.6.400.6 1.100.1 1.600l-.7.700c-.7.700-1.700.9-2.700.5-3.800-1.600-6.400-4.400-7.900-8.200-.4-1-.2-2 .5-2.700z" fill="#fff"/><path d="M12.500 3.600c3.300.3 5.400 2.400 5.600 5.700M12.700 5.600c2 .2 3.200 1.400 3.400 3.400M12.900 7.500c.9.100 1.400.6 1.500 1.500" fill="none" stroke="#cdb8f2" stroke-width=".9" stroke-linecap="round"/></g></svg><span class="c" style="left:1470px">Business English, English for travellers, Financial English</span><span class="c" style="left:2052px">United States</span><span class="c" style="left:2244px">PayPal</span><span class="c" style="left:2402px">2025-09-04 18:56</span></div>
<div class="row alt" style="top:868px"><i class="ex"></i><i class="v0"></i><span class="c" style="left:56px">Neil deGrasse Tyson</span><i class="sw" style="left:704px;background:#7ffb4f"></i><span class="c lnk" style="left:760px">neil@simpsons.com</span><span class="c" style="left:1032px">+1 293 203 1203</span><svg style="left:1236px;top:7px" width="26" height="26" viewBox="0 0 26 26"><path d="M13 0a13 13 0 1 1-6.200 24.430L.7 26l1.650-5.900A13 13 0 0 1 13 0z" fill="#6ecf72"/><path d="M8.300 6.200c.6-.55 1.400-.4 1.750.3l.95 1.900c.25.500.15 1.050-.25 1.450l-.75.750c.9 1.800 2.200 3.100 4 4l.75-.75c.4-.4.950-.5 1.450-.25l1.900.95c.7.350.85 1.150.3 1.750l-.8.800c-.85.850-2.050 1.050-3.150.65-4.100-1.500-6.800-4.200-8.300-8.300-.4-1.100-.2-2.300.65-3.150z" fill="#fff" transform="translate(13 13.700) scale(1.090) translate(-13 -13)"/></svg><svg style="left:1296px;top:7px" width="26" height="26" viewBox="0 0 26 26"><circle cx="13" cy="13" r="13" fill="#63abdf"/><path d="M5.200 12.600l13.900-5.500c.65-.25 1.200.15 1 1.100l-2.400 11.200c-.15.800-.65 1-1.300.6l-3.650-2.700-1.750 1.700c-.2.200-.35.350-.75.350l.25-3.700 6.800-6.150c.3-.25-.05-.4-.45-.15l-8.400 5.300-3.600-1.150c-.8-.25-.8-.8.350-1.250z" fill="#fff"/></svg><i class="sw" style="left:1354px;background:#fff"></i><span class="c" style="left:1470px">Business English, Casual English</span><span class="c" style="left:2052px">United States</span><span class="c" style="left:2244px">Bank transfer</span></div>
<div class="row" style="top:912px"><i class="ex"></i><i class="v0"></i><span class="c" style="left:56px">Brunella Pommelhorst</span><i class="sw" style="left:704px;background:#3a12e8"></i><span class="c lnk" style="left:760px">brunella@simpsons.com</span><span class="c" style="left:1032px">+1 230 402 2031</span><svg style="left:1236px;top:7px" width="26" height="26" viewBox="0 0 26 26"><path d="M13 0a13 13 0 1 1-6.200 24.430L.7 26l1.650-5.900A13 13 0 0 1 13 0z" fill="#6ecf72"/><path d="M8.300 6.200c.6-.55 1.400-.4 1.750.3l.95 1.900c.25.500.15 1.050-.25 1.450l-.75.750c.9 1.800 2.200 3.100 4 4l.75-.75c.4-.4.950-.5 1.450-.25l1.900.95c.7.350.85 1.150.3 1.750l-.8.800c-.85.850-2.050 1.050-3.150.65-4.100-1.500-6.800-4.200-8.300-8.300-.4-1.100-.2-2.300.65-3.150z" fill="#fff" transform="translate(13 13.700) scale(1.090) translate(-13 -13)"/></svg><svg style="left:1296px;top:7px" width="26" height="26" viewBox="0 0 26 26"><circle cx="13" cy="13" r="13" fill="#63abdf"/><path d="M5.200 12.600l13.900-5.500c.65-.25 1.200.15 1 1.100l-2.400 11.200c-.15.800-.65 1-1.300.6l-3.650-2.700-1.750 1.700c-.2.200-.35.350-.75.350l.25-3.700 6.800-6.150c.3-.25-.05-.4-.45-.15l-8.400 5.300-3.600-1.150c-.8-.25-.8-.8.350-1.250z" fill="#fff"/></svg><i class="sw" style="left:1354px;background:#fff"></i><span class="c" style="left:1470px">Casual English, Financial English</span><span class="c" style="left:2052px">Germany</span><span class="c" style="left:2244px">Stripe</span></div>
<div class="row alt" style="top:956px"><i class="ex"></i><i class="v0"></i><span class="c" style="left:56px">Ms. Mellon</span><i class="sw" style="left:704px;background:#7ffb4f"></i><span class="c lnk" style="left:760px">mellon@simpsons.com</span><span class="c" style="left:1032px">+1 203 320 2068</span><i class="sw" style="left:1234px;background:#fff"></i><svg style="left:1296px;top:7px" width="26" height="26" viewBox="0 0 26 26"><circle cx="13" cy="13" r="13" fill="#63abdf"/><path d="M5.200 12.600l13.900-5.500c.65-.25 1.200.15 1 1.100l-2.400 11.200c-.15.800-.65 1-1.300.6l-3.650-2.700-1.750 1.700c-.2.200-.35.350-.75.350l.25-3.700 6.800-6.150c.3-.25-.05-.4-.45-.15l-8.400 5.300-3.600-1.150c-.8-.25-.8-.8.350-1.250z" fill="#fff"/></svg><svg style="left:1356px;top:8px" width="24" height="25" viewBox="0 0 24 25"><path d="M7 0h10c4.200 0 7 2.800 7 7v7.200c0 4.200-2.800 7-7 7H9.800L5.800 24.700c-.4.500-1 .3-1-.4v-3.600C1.800 19.800 0 17.600 0 14.200V7C0 2.800 2.800 0 7 0z" fill="#8d5cdc"/><g transform="translate(11.300 11.400) scale(1.170) translate(-11.500 -10.500)"><path d="M7.200 4.600c.5-.5 1.200-.4 1.600.1l1.200 1.700c.3.500.3 1-.1 1.400l-.8.800c.9 2.100 2.300 3.700 4.300 4.800l.8-.8c.4-.4 1-.5 1.400-.1l1.700 1.200c.6.400.6 1.100.1 1.600l-.7.700c-.7.700-1.700.9-2.700.5-3.800-1.600-6.400-4.400-7.900-8.200-.4-1-.2-2 .5-2.700z" fill="#fff"/><path d="M12.500 3.600c3.300.3 5.400 2.400 5.600 5.700M12.700 5.600c2 .2 3.200 1.400 3.400 3.400M12.900 7.500c.9.100 1.400.6 1.500 1.500" fill="none" stroke="#cdb8f2" stroke-width=".9" stroke-linecap="round"/></g></svg><span class="c" style="left:1470px">Exam Preparation, Financial English</span><span class="c" style="left:2052px">United States</span><span class="c" style="left:2244px">Bank transfer</span></div>
<svg style="left:757px;top:437px" width="28" height="42" viewBox="0 0 28 42"><path d="M1.900 3.500V34.400L9 27.300L14.200 39.300L18.300 37.300L13.700 26.100H24.800z" fill="#fff" stroke="#000" stroke-width="1.300" stroke-linejoin="miter"/></svg>
<div id="pg"><svg style="left:12px;top:13px" width="21" height="25" viewBox="0 0 21 25"><rect x="0" y=".7" width="5.200" height="24" fill="#a8a8f0" opacity=".6"/><path d="M20 .7v22L8.500 11.700z" fill="#a8a8f0" opacity=".6"/></svg><svg style="left:58px;top:13px" width="12" height="24" viewBox="0 0 12 24"><path d="M12 .7v22L.2 11.700z" fill="#a8a8f0" opacity=".6"/></svg><i class="abs" style="left:92px;top:12px;width:2px;height:28px;background:#d0d0d0"></i><span class="t" style="left:111px">Page</span><div class="abs" style="left:178px;top:6px;width:100px;height:38px;border:2px solid #cfcfcf;background:#fff"><span class="abs" style="left:5px;top:6px;line-height:26px;color:#444">1</span></div><span class="t" style="left:290px">of 1</span><i class="abs" style="left:344px;top:12px;width:2px;height:28px;background:#d0d0d0"></i><svg width="0" height="0"><defs><linearGradient id="gp" x1="0" y1="0" x2="1" y2="1"><stop offset="0" stop-color="#b4bdf4"/><stop offset="1" stop-color="#7d8de4"/></linearGradient><linearGradient id="gr" x1="0" y1="0" x2="0" y2="1"><stop offset="0" stop-color="#b9d5fb"/><stop offset="1" stop-color="#5f93ea"/></linearGradient><linearGradient id="gx" x1="0" y1="0" x2="1" y2="0"><stop offset="0" stop-color="#6fb845"/><stop offset=".5" stop-color="#c0f08c"/><stop offset="1" stop-color="#62ad38"/></linearGradient></defs></svg><svg style="left:365px;top:14px" width="14" height="24" viewBox="0 0 14 24"><path d="M.7 0v22.500L13 11.200z" fill="url(#gp)"/></svg><svg style="left:405px;top:14px" width="22" height="25" viewBox="0 0 22 25"><path d="M.7 0v22.500L13 11.200z" fill="url(#gp)"/><rect x="15.500" y="0" width="5.200" height="24" fill="url(#gp)"/></svg><i class="abs" style="left:442px;top:12px;width:2px;height:28px;background:#d0d0d0"></i><svg style="left:455px;top:11px" width="30" height="30" viewBox="0 0 30 30"><path d="M1.500 13.500A11.500 11.500 0 0 1 21.500 5.500L25 2V13.500H13.500L17.600 9.400A6.300 6.300 0 0 0 7.200 13.500z" transform="translate(1.500,0)" fill="url(#gr)" stroke="#4d82e2" stroke-width="1.200"/><path d="M1.500 13.500A11.500 11.500 0 0 1 21.500 5.500L25 2V13.500H13.500L17.600 9.400A6.300 6.300 0 0 0 7.200 13.500z" transform="rotate(180 15 15) translate(1.500,0)" fill="url(#gr)" stroke="#4d82e2" stroke-width="1.200"/></svg><i class="abs" style="left:496px;top:12px;width:2px;height:28px;background:#d0d0d0"></i><svg style="left:508px;top:13px" width="32" height="26" viewBox="0 0 32 26"><path d="M18.300 1.300H28L12.100 20.300H2.800z" fill="#4e9a2a"/><path d="M.3 1.300H9.600L31.400 24.600H20.800z" fill="url(#gx)" stroke="#4e9a2a" stroke-width=".8"/></svg><svg style="left:553px;top:13px" width="28" height="26" viewBox="0 0 28 26"><path d="M.7 1h4v16l4.800.5L.7 25.500z" fill="#82c45c"/><rect x="8.200" y="2" width="13.500" height="5.300" fill="#fff" stroke="#5b9bf8" stroke-width="2"/><rect x="8.200" y="8.300" width="17.800" height="5.700" fill="#fff" stroke="#5b9bf8" stroke-width="2"/></svg><span class="t" style="left:2359px;color:#444a50">Displaying 1 - 14 of 14</span></div>
<div id="note"><span class="t">Connected in 299 ms</span><svg style="left:576px;top:8px" width="16" height="16" viewBox="0 0 16 16"><path d="M2.300 2.300l11.400 11.400M13.700 2.300L2.300 13.700" stroke="#fff" stroke-width="4.400" fill="none"/></svg></div>
</body></html>
